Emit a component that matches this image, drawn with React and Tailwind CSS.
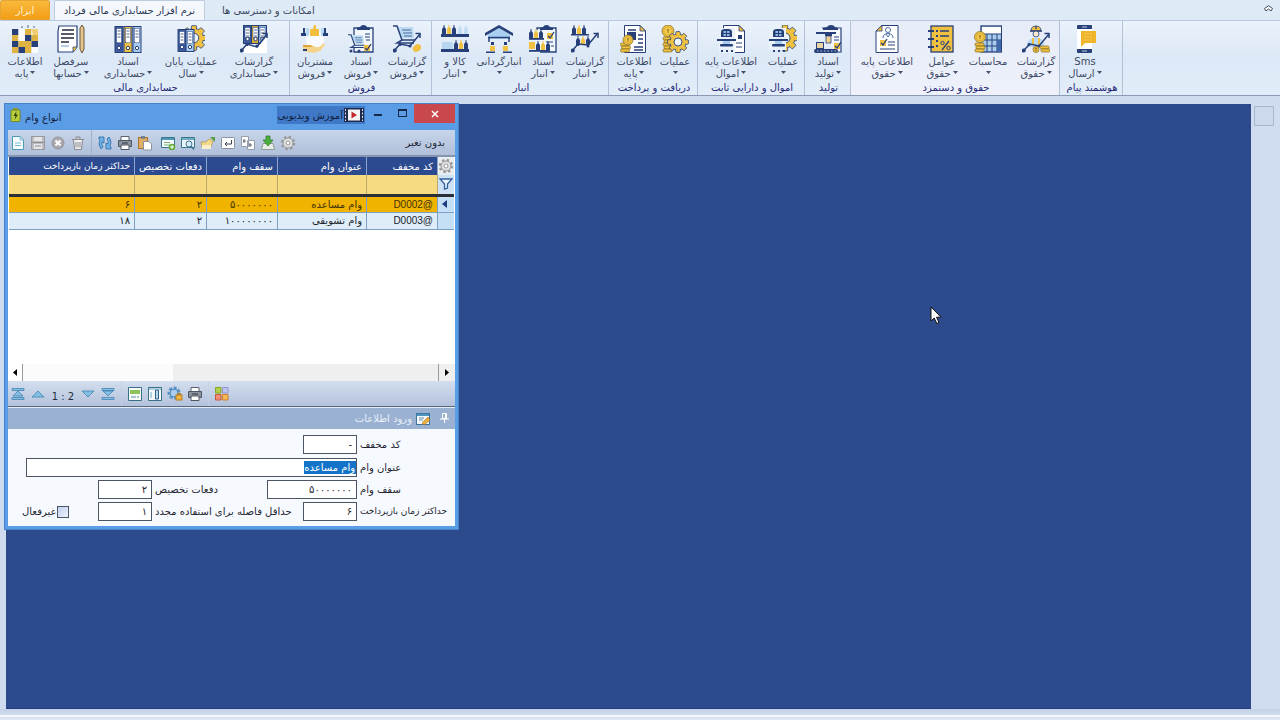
import React, { useState } from "react";

const NAVY = "#27407a";
const GOLD = "#f0c040";

/* ---------- shared icon parts ---------- */

const Page = ({ x = 0, y = 0, w = 20, h = 27 }) => (
  <g transform={`translate(${x} ${y})`}>
    <path d={`M.5 .5H${w - 6}L${w - .5} 6V${h - .5}H.5Z`} fill="#fff" stroke={NAVY} />
    <path d={`M${w - 6} .5V6H${w - .5}Z`} fill={GOLD} stroke={NAVY} strokeWidth=".8" />
  </g>
);

const Binder = ({ x, y = 1, h = 26, color = "#3d5a9a" }) => (
  <g transform={`translate(${x} ${y})`}>
    <rect x=".5" y=".5" width="8" height={h} fill={color} stroke={NAVY} />
    <rect x="2" y="2.5" width="5" height={h * 0.55} fill="#fff" stroke={NAVY} strokeWidth=".5" />
    <path d="M3 5H6M3 8H6M3 11H6" stroke={NAVY} strokeWidth=".8" />
    <circle cx="4.5" cy={h - 4} r="1.7" fill="#fff" stroke={NAVY} />
  </g>
);

const Bottles = ({ x, y, light }) => (
  <g transform={`translate(${x} ${y})`}>
    <path d="M0 9V4L1.5 2V0H2.5V2L4 4V9Z" fill={NAVY} />
    <path d="M5 9V4L6.5 2V0H7.5V2L9 4V9Z" fill={GOLD} />
    <path d="M10 9V4L11.5 2V0H12.5V2L14 4V9Z" fill={NAVY} />
    {light && <path d="M16 9V4L17.5 2V0H18.5V2L20 4V9ZM22 9V4L23.5 2V0H24.5V2L26 4V9Z" fill="#c3ddf3" />}
  </g>
);

const Coins = ({ x, y, n = 3 }) => (
  <g transform={`translate(${x} ${y})`}>
    {Array.from({ length: n }, (_, i) => (
      <rect key={i} x={i % 2} y={i * 3} width="9" height="3" rx="1.2" fill={GOLD} stroke="#80691f" strokeWidth=".7" />
    ))}
  </g>
);

const Coin = ({ x, y, r = 5 }) => (
  <g transform={`translate(${x} ${y})`}>
    <circle r={r} fill="#f3c848" stroke="#8b7128" strokeWidth=".8" />
    <circle r={r - 1.6} fill="none" stroke="#c99b26" strokeWidth=".6" />
    <path d="M0-2V2M-1-1H1" fill="none" stroke="#8a6a1c" strokeWidth=".8" />
  </g>
);

const Gear = ({ x, y, r = 8 }) => (
  <g transform={`translate(${x} ${y})`}>
    {[0, 45, 90, 135].map((a) => (
      <rect key={a} x={-r * 0.27} y={-r * 1.3} width={r * 0.54} height={r * 2.6} rx=".7" fill={GOLD} stroke={NAVY} strokeWidth=".8" transform={`rotate(${a})`} />
    ))}
    <circle r={r} fill={GOLD} stroke={NAVY} strokeWidth=".8" />
    {[0, 45, 90, 135].map((a) => (
      <rect key={a} x={-r * 0.22} y={-r * 1.15} width={r * 0.44} height={r * 2.3} fill={GOLD} transform={`rotate(${a})`} />
    ))}
    <circle r={r * 0.5} fill="#eef4fb" stroke={NAVY} strokeWidth=".9" />
  </g>
);

const Trend = ({ d = "M1 26L7 19L17 21L27 8" }) => (
  <g fill="none" stroke={NAVY} strokeWidth="1.5">
    <path d={d} />
    <path d="M22.5 8.5H27V13" />
    <circle cx="1.8" cy="25.500" r="1.300" fill={NAVY} />
    <circle cx="7" cy="19.500" r=".8" fill={NAVY} />
    <circle cx="17" cy="21" r=".8" fill={NAVY} />
  </g>
);

const Clipboard = ({ x = 6 }) => (
  <g transform={`translate(${x} 0)`}>
    <path d="M1 3H20V27H1Z" fill="#f2f7fc" stroke={NAVY} strokeWidth="1.300" />
    <path d="M4 5V3L7 2Q8 0 10.500 0Q13 0 14 2L17 3V5Z" fill={NAVY} />
  </g>
);

const Tick = ({ x, y }) => (
  <g transform={`translate(${x} ${y})`}>
    <rect width="6" height="6" fill={GOLD} />
    <path d="M1 3L3 5L7-1" fill="none" stroke={NAVY} strokeWidth="1.300" />
  </g>
);

const Cart = () => (
  <g>
    <path d="M5 2H20L21 13H9Z" fill="#bcd9f2" />
    <path d="M0 1H4L9 15H22M9 15L4 18H21" fill="none" stroke={NAVY} strokeWidth="1.500" />
    <path d="M9 5H18M10 8H19M11 11H19" fill="none" stroke="#46699f" />
  </g>
);

const Helmet = () => (
  <g transform="translate(0 3)">
    <path d="M4 9V4Q4 1 8 1H11Q15 1 15 4V9Z" fill={NAVY} />
    <path d="M6.500 3H9V5H6.500ZM10 3H12.500V5H10ZM6.500 6H9V8H6.500ZM10 6H12.500V8H10Z" fill="#8fb6df" />
    <rect y="11" width="19" height="2" fill={NAVY} />
    <rect x="6" y="13" width="7" height="3" fill="#a9cdee" />
    <rect x="3" y="16" width="13" height="2.500" rx="1" fill={NAVY} />
  </g>
);

const CHECKER = ["N.G.", "G.NG", "NGGN", "GNG."];

/* ---------- ribbon icons ---------- */

const ICONS = {
  checker: (
    <g>
      {CHECKER.map((row, y) =>
        row.split("").map((c, x) => (
          <rect key={`${x}-${y}`} x={x * 6.5 + 1} y={y * 6 + 4} width="6.500" height="6" fill={c === "N" ? NAVY : c === "G" ? "#dfb342" : "#f8fafc"} />
        ))
      )}
      <path d="M11 1V3M17 0V3M23 1V3" stroke="#56657f" />
      <path d="M20 4H27V10H22Z" fill="#f0cf78" />
    </g>
  ),
  ledger: (
    <g>
      <path d="M2 1H20V22L16 27H1V6Z" fill="#fff" stroke={NAVY} strokeWidth="1.200" />
      <path d="M5 5H17M4 9H17M4 13H17M4 17H12" stroke="#1f2737" strokeWidth="1.300" />
      <path d="M4 21H12" stroke="#8fb6df" strokeWidth="1.300" />
      <path d="M16 27V22H20" fill={GOLD} stroke={NAVY} strokeWidth=".8" />
      <path d="M23 3L25 0L27 3V24L25 28L23 24Z" fill="#e5c58d" stroke="#57492e" strokeWidth=".9" />
    </g>
  ),
  binders: (
    <g>
      <Binder x={0.5} />
      <Binder x={9.5} color={GOLD} />
      <Binder x={18.5} color="#a7cbee" />
    </g>
  ),
  yearEnd: (
    <g>
      <Gear x={17} y={13} r={9.5} />
      <rect x="0" y="4" width="16" height="24" fill="#edf4fb" />
      <Binder x={0.5} y={4} h={22} />
      <Binder x={8.5} y={4} h={22} color="#a7cbee" />
    </g>
  ),
  binderReport: (
    <g>
      <Binder x={3} y={0} h={18} />
      <Binder x={11} y={0} h={18} color="#d5a93a" />
      <Binder x={18} y={0} h={18} color="#8eb7e0" />
      <path d="M2 26L8 19L18 22L27 11V28H2Z" fill="#fff" />
      <Trend d="M1 26L7 19L17 22L27 9" />
    </g>
  ),
  customers: (
    <g>
      <circle cx="14" cy="15" r="9" fill="#f8fbfe" />
      <path d="M5 3H8V11H5ZM20 3H23V11H20Z" fill="#b7d8f2" />
      <path d="M2 3H4V8H5V11H0V8H2ZM23 3H25V8H27V11H22V8H23Z" fill={NAVY} />
      <path d="M9 4H12L13 0H15V4H18V11H9Z" fill="#f3bd3d" />
      <path d="M2 20H10L15 22H18L23 18L24 20L19 26L13 28L2 26Z" fill="#f4d48a" />
      <path d="M2 20H9L12 22H2Z" fill="#dda334" />
      <path d="M2 24H6V26H2Z" fill={NAVY} />
    </g>
  ),
  saleDocs: (
    <g>
      <Clipboard x={6} />
      <path d="M2 10H16V23H2Z" fill="#e3eef9" />
      <g transform="translate(1 9) scale(.75)"><Cart /></g>
      <path d="M18 9H23M18 12H23M19 15H23" stroke={NAVY} />
      <Tick x={17} y={20} />
      <circle cx="4" cy="26" r="1.500" fill={NAVY} /><circle cx="12" cy="26" r="1.500" fill={NAVY} />
    </g>
  ),
  saleReport: (
    <g>
      <Cart />
      <Trend d="M1 26L7 19L17 21L27 9" />
      <ellipse cx="24" cy="23" rx="4.500" ry="3.500" fill={GOLD} transform="rotate(-35 24 23)" />
    </g>
  ),
  goods: (
    <g>
      <Bottles x={1} y={0} light />
      <rect y="9" width="28" height="3" fill={NAVY} />
      <rect x="1" y="17" width="11" height="7" fill="#b7d7f1" />
      <Bottles x={13} y={15} />
      <rect y="24" width="28" height="3" fill={NAVY} />
    </g>
  ),
  warehouse: (
    <g>
      <path d="M3 9L14 3L25 9V14H3Z" fill="#a9d0f1" />
      <path d="M0 8L14 0L28 8V11L14 3L0 11Z" fill={NAVY} />
      <path d="M3 12.500H25M4 13V17M24 13V17M1 27.200H10M18 27.200H27" stroke={NAVY} strokeWidth="1.500" />
      <rect x="6" y="17" width="3" height="3" fill={NAVY} /><rect x="19" y="17" width="3" height="3" fill={NAVY} />
      <path d="M5 21H10V26H5ZM18 21H23V26H18Z" fill={GOLD} />
    </g>
  ),
  stockDocs: (
    <g>
      <Clipboard x={7} />
      <rect x="0" y="5" width="11" height="23" fill="#e8f1fa" />
      <Bottles x={0} y={4} />
      <rect y="13" width="15" height="1.800" fill={NAVY} />
      <Tick x={18} y={8} />
      <rect x="0" y="17" width="6" height="7" fill={GOLD} />
      <Bottles x={7} y={16} />
      <rect y="25" width="21" height="1.800" fill={NAVY} />
      <path d="M17 17H24M22 21H25" stroke={NAVY} />
    </g>
  ),
  stockReport: (
    <g>
      <Bottles x={1} y={0} />
      <rect y="9" width="18" height="1.500" fill={NAVY} />
      <Bottles x={5} y={11} />
      <Trend d="M1 26L7 19L17 20L27 8" />
    </g>
  ),
  payInfo: (
    <g>
      <Page x={4} y={0} w={22} h={28} />
      <path d="M8 5H16M18 10H23M18 14H23M18 18H23M14 22H23M14 25H23" stroke={NAVY} strokeWidth="1.300" />
      <rect x="7" y="7" width="9" height="8" fill={NAVY} />
      <Coins x={0.5} y={18} />
      <Coin x={8} y={15} r={5} />
    </g>
  ),
  payOps: (
    <g>
      <Coins x={2} y={12} n={5} />
      <Coin x={7} y={6} r={6} />
      <Gear x={17} y={17} r={8} />
    </g>
  ),
  assetInfo: (
    <g>
      <Page x={6} y={0} w={22} h={28} />
      <path d="M2 3H18V28H2Z" fill="#e9f1fa" />
      <Helmet />
      <path d="M21 10H25V14H21Z" fill={NAVY} />
      <path d="M19 18H25M19 22H25" stroke={NAVY} />
      <path d="M4 26H6M9 26H11M14 26H16" stroke={NAVY} strokeWidth="2" />
    </g>
  ),
  assetOps: (
    <g>
      <Gear x={16} y={13} r={10} />
      <path d="M0 0H12V3H17V25H0Z" fill="#e9f1fa" />
      <Helmet />
      <path d="M4 26H6M9 26H11M14 26H16" stroke={NAVY} strokeWidth="2" />
    </g>
  ),
  production: (
    <g>
      <path d="M8 3H27V27H20" fill="#f4f8fd" stroke={NAVY} strokeWidth="1.200" />
      <path d="M9 5V3L13 2Q14 0 17 0Q20 0 21 2L24 3V5Z" fill={NAVY} />
      <path d="M2 7H22V9H2ZM11 9H18V11H11Z" fill={NAVY} />
      <path d="M12 11H17V18H12Z" fill="#f2d090" stroke={NAVY} strokeWidth=".8" />
      <path d="M20 12H25M20 15H25" stroke={NAVY} />
      <Tick x={20} y={18} />
      <rect x="2.500" y="17.500" width="7" height="6" fill="#e8d5a3" stroke={NAVY} />
      <rect x="0" y="24" width="24" height="4" rx="2" fill={NAVY} />
      <path d="M3 26H22" stroke="#b5c6de" strokeDasharray="1.500 2" />
    </g>
  ),
  salaryInfo: (
    <g>
      <path d="M3 6L9 .5H25V27.500H3Z" fill="#fff" stroke={NAVY} />
      <path d="M3 6H9V.5Z" fill={GOLD} stroke={NAVY} strokeWidth=".8" />
      <circle cx="15" cy="5" r="2.500" fill="#fff" stroke="#4d6ea8" />
      <path d="M10 13Q10 8.500 15 8.500Q20 8.500 20 13M13 9L15 12L17 9" fill="none" stroke="#4d6ea8" />
      <Tick x={7} y={15} />
      <path d="M15 17H22M15 20H22M7 24H22" stroke={NAVY} />
    </g>
  ),
  factors: (
    <g>
      <rect x="3" y="1" width="22" height="26" fill={GOLD} stroke={NAVY} strokeWidth="1.300" />
      <path d="M0 6H6M0 14H6M0 22H6" stroke={NAVY} strokeWidth="2" />
      <path d="M12 6H21M12 11H21" stroke={NAVY} strokeWidth="1.400" />
      <path d="M8 5H10V7H8ZM8 10H10V12H8ZM8 15H10V17H8ZM8 20H10V22H8Z" fill={NAVY} />
      <path d="M14 25L21 16" stroke={NAVY} strokeWidth="1.300" />
      <circle cx="14.500" cy="18" r="1.700" fill="none" stroke={NAVY} /><circle cx="20.500" cy="23" r="1.700" fill="none" stroke={NAVY} />
    </g>
  ),
  calc: (
    <g>
      <rect x="7" y="1" width="20.500" height="26" fill="#a9cdee" stroke={NAVY} strokeWidth="1.300" />
      <rect x="8" y="2" width="19" height="7" fill="#fff" />
      <path d="M13 9V27M18 9V27M23 9V27M8 9H28M8 15H28M8 21H28" stroke={NAVY} />
      <rect x="23" y="15" width="4" height="11" fill="#3e68a8" />
      <Coins x={1} y={18} />
      <Coin x={6} y={12} r={5.5} />
    </g>
  ),
  salaryReport: (
    <g>
      <path d="M9 6Q9 1 14 1Q19 1 19 6Z" fill={GOLD} stroke={NAVY} strokeWidth=".8" />
      <path d="M8 6H20M14 1V4" stroke={NAVY} strokeWidth="1.300" />
      <circle cx="14" cy="9" r="3" fill="#fbe8ce" stroke={NAVY} strokeWidth=".8" />
      <path d="M5 20Q5 13 14 13Q21 13 22 18V22H5Z" fill="#b8d8f4" />
      <path d="M11 13V20M17 13V20" stroke={GOLD} strokeWidth="2" />
      <Trend d="M1 26L8 19L17 21L27 9" />
      <Coin x={14} y={24.5} r={3} />
      <Coins x={18} y={21} n={2} />
    </g>
  ),
  sms: (
    <g>
      <rect x="6" y="1" width="15" height="26" rx="1" fill="#fff" />
      <path d="M6 4V1Q6 0 7 0H20Q21 0 21 1V4ZM6 24H21V27Q21 28 20 28H7Q6 28 6 27Z" fill={NAVY} />
      <path d="M11 2H16M11 26H16" stroke="#b8cbe4" />
      <path d="M10 6H25V18H14L10 22Z" fill="#f0b429" />
      <path d="M13 9H22M13 12H22M13 15H20" stroke="#f6cb6b" strokeDasharray="2 1" />
    </g>
  ),
};

/* ---------- ribbon ---------- */

const GROUPS = [
  {
    title: "حسابداری مالی",
    cls: "w-[290px]",
    items: [
      ["checker", "اطلاعات", "پایه", "w-[46px]"],
      ["ledger", "سرفصل", "حسابها", "w-[46px]"],
      ["binders", "اسناد", "حسابداری", "w-[68px]"],
      ["yearEnd", "عملیات پایان", "سال", "w-[58px]"],
      ["binderReport", "گزارشات", "حسابداری", "w-[68px]"],
    ],
  },
  {
    title: "فروش",
    cls: "w-[142px]",
    items: [
      ["customers", "مشتریان", "فروش", "w-[46px]"],
      ["saleDocs", "اسناد", "فروش", "w-[46px]"],
      ["saleReport", "گزارشات", "فروش", "w-[46px]"],
    ],
  },
  {
    title: "انبار",
    cls: "w-[177px]",
    items: [
      ["goods", "کالا و", "انبار", "w-[42px]"],
      ["warehouse", "انبارگردانی", "", "w-[46px]"],
      ["stockDocs", "اسناد", "انبار", "w-[42px]"],
      ["stockReport", "گزارشات", "انبار", "w-[42px]"],
    ],
  },
  {
    title: "دریافت و پرداخت",
    cls: "w-[89px]",
    items: [
      ["payInfo", "اطلاعات", "پایه", "w-[46px]"],
      ["payOps", "عملیات", "", "w-[36px]"],
    ],
  },
  {
    title: "اموال و دارایی ثابت",
    cls: "w-[107px]",
    items: [
      ["assetInfo", "اطلاعات پایه", "اموال", "w-[62px]"],
      ["assetOps", "عملیات", "", "w-[42px]"],
    ],
  },
  { title: "تولید", cls: "w-[46px]", items: [["production", "اسناد", "تولید", "w-[42px]"]] },
  {
    title: "حقوق و دستمزد",
    cls: "w-[209px] bg-linear-to-b from-[#e6ecf8] to-[#eef1fa]",
    items: [
      ["salaryInfo", "اطلاعات پایه", "حقوق", "w-[68px]"],
      ["factors", "عوامل", "حقوق", "w-[42px]"],
      ["calc", "محاسبات", "", "w-[50px]"],
      ["salaryReport", "گزارشات", "حقوق", "w-[46px]"],
    ],
  },
  { title: "هوشمند پیام", cls: "w-[63px]", items: [["sms", "Sms", "ارسال", "w-[46px]"]] },
];

const RibbonButton = ({ icon, top, bottom, width }) => (
  <button type="button" className={`flex flex-col items-center whitespace-nowrap text-[10px] leading-[11px] text-[#3d4a66] ${width}`}>
    <svg width="28" height="28" viewBox="0 0 28 28">{ICONS[icon]}</svg>
    <span className="mt-[3px]" dir="rtl">{top}</span>
    <span className="flex h-3 items-center gap-0.5">
      {bottom && <span dir="rtl">{bottom}</span>}
      <svg width="5" height="4" viewBox="0 0 5 4"><path d="M0 0H5L2.500 3Z" fill="#45516b" /></svg>
    </span>
  </button>
);

function Ribbon() {
  return (
    <header>
      <nav className="flex h-5 items-stretch bg-[#deeaf6] text-[10px]">
        <button type="button" className="w-[50px] rounded-t-xs border border-[#e8a433] bg-linear-to-b from-[#f9b93a] to-[#f29e12] text-[#fff1cf]">ابزار</button>
        <button type="button" className="ml-1 w-[151px] rounded-t-xs border-x border-t border-[#bccbdf] bg-[#f4f8fd] text-[#2b3852]" dir="rtl">
          نرم افزار حسابداری مالی فرداد
        </button>
        <button type="button" className="px-[17px] text-[#3a4862]" dir="rtl">امکانات و دسترسی ها</button>
        <button type="button" aria-label="collapse" className="mr-1 ml-auto flex w-4 items-center justify-center pb-1">
          <svg width="9" height="7" viewBox="0 0 9 7" fill="#fff" stroke="#3f4b60"><path d="M.5 3.500L4.500 .7L8.500 3.500L7 6L4.500 4L2 6Z" /></svg>
        </button>
      </nav>
      <div className="flex h-[76px] border-t border-b border-t-[#b9c8dc] border-b-[#8b9bb5] bg-linear-to-b from-[#eaf2fb] via-[#dce8f6] to-[#e2edf9]">
        {GROUPS.map((g) => (
          <section key={g.title} className={`flex shrink-0 flex-col border-r border-[#b3c1d8] pt-1 pl-0.5 ${g.cls}`}>
            <div className="flex">
              {g.items.map(([icon, top, bottom, width]) => (
                <RibbonButton key={icon} icon={icon} top={top} bottom={bottom} width={width} />
              ))}
            </div>
            <h2 className="mt-[3px] text-center text-[10px] leading-3 whitespace-nowrap text-[#252a78]" dir="rtl">{g.title}</h2>
          </section>
        ))}
      </div>
    </header>
  );
}

/* ---------- window toolbars ---------- */

const Glyph = ({ children }) => (
  <svg width="16" height="16" viewBox="0 0 16 16" fill="none">{children}</svg>
);

const TOOLS = {
  new: <Glyph><path d="M2.500 1.500H10L13.500 5V14.500H2.500Z" fill="#f5fcff" stroke="#4a9ab5" /><path d="M10 1.500V5H13.500M5 8H11M5 10.500H11" stroke="#7fbad0" /></Glyph>,
  save: <Glyph><path d="M1.500 1.500H14.500V14.500H1.500Z" fill="#bcbcc0" stroke="#97979e" /><path d="M4 2H12V6H4ZM4 9H12V14H4Z" fill="#e5e5e8" /><path d="M5 11H11M2 7.500H14" stroke="#8e8e94" /></Glyph>,
  cancel: <Glyph><circle cx="8" cy="8" r="6" fill="#a9a9ad" stroke="#94949a" /><path d="M5.500 5.500L10.500 10.500M10.500 5.500L5.500 10.500" stroke="#fff" strokeWidth="2" /></Glyph>,
  trash: <Glyph><path d="M4 5H12L11 14H5Z" fill="#f2f2f2" /><path d="M2 4.500H14M6 4V2H10V4M3.500 5L4.500 14.500H11.500L12.500 5M6 7V12.500M8 7V12.500M10 7V12.500" stroke="#8c8c90" /></Glyph>,
  refresh: <Glyph><path d="M7 2H2V4L3 5Q1 9 3 12L4 14L6 12Q4 9 5 7L7 8ZM9 14H14V12L13 11Q15 7 13 4L12 2L10 4Q12 7 11 9L9 8Z" fill="#6eb2e8" stroke="#286ba5" strokeWidth=".8" /></Glyph>,
  print: <Glyph><path d="M4 1.500H12V6H4Z" fill="#fff" stroke="#5b626d" /><path d="M1.500 5.500H14.500V11.500H1.500Z" fill="#8b949f" stroke="#4e5660" /><path d="M4 10H12V14.500H4Z" fill="#fff" stroke="#4e5660" /><path d="M5 8H11" stroke="#333b45" /></Glyph>,
  paste: <Glyph><rect x="1.500" y="2.500" width="9" height="11" fill="#e2ad64" stroke="#a9702c" /><rect x="4" y="1" width="4" height="3" fill="#778391" /><path d="M6.500 6.500H12L14.500 9V15H6.500Z" fill="#fff" stroke="#8993a0" /></Glyph>,
  addRow: <Glyph><path d="M1.500 2.500H14.500V12.500H1.500Z" fill="#f8fcfd" stroke="#39778f" /><path d="M2 4H14" stroke="#4e98b7" strokeWidth="2" /><path d="M4 7.500H10M4 10H9" stroke="#79ae72" /><circle cx="12" cy="12" r="3.300" fill="#62ad39" /><path d="M10 12H14M12 10V14" stroke="#fff" /></Glyph>,
  find: <Glyph><path d="M1.500 2.500H14.500V12.500H1.500Z" fill="#eaf5fb" stroke="#39778f" /><path d="M2 4H14" stroke="#72aac5" strokeWidth="2" /><circle cx="9" cy="9" r="3" fill="#d5ecf9" stroke="#49738f" /><path d="M11 11L14 14.500" stroke="#49738f" strokeWidth="1.500" /></Glyph>,
  edit: <Glyph><path d="M1 7H6L9 4L13 6L11 12H2Z" fill="#f3d989" stroke="#b99750" strokeWidth=".8" /><path d="M10 2H15V7Z" fill="#549e42" /><path d="M2 10H11V14H2Z" fill="#f9edca" /></Glyph>,
  enter: <Glyph><rect x="1.500" y="2.500" width="13" height="11" rx="1" fill="#fff" stroke="#8b919c" /><path d="M11.500 5V9H5M7 7L5 9L7 11" stroke="#3f4652" /></Glyph>,
  copy: <Glyph><path d="M1.500 1.500H8.500V11.500H1.500ZM7.500 5.500H14.500V14.500H7.500Z" fill="#fff" stroke="#959da8" /><path d="M4 4V8M3 6H6M10 8V12M9 10H12" stroke="#56606e" /></Glyph>,
  export: <Glyph><path d="M3 8.500H13L14.500 14.500H1.500Z" fill="#e7ece6" stroke="#929b91" /><path d="M6 1H10V5H13L8 11L3 5H6Z" fill="#4caf3b" stroke="#2e7a24" strokeWidth=".7" /></Glyph>,
  gear: <Glyph><circle cx="8" cy="8" r="6" stroke="#9a9a9d" strokeWidth="2.500" strokeDasharray="2.400 2.300" /><circle cx="8" cy="8" r="5" fill="#e2e2e2" stroke="#949498" /><circle cx="8" cy="8" r="2" fill="#fff" stroke="#949498" /></Glyph>,
  first: <Glyph><path d="M2 2.500H14V4.500H2ZM8 5L13 10H3ZM2 11.500H14V13.500H2Z" fill="#82bfe3" stroke="#4384b2" strokeWidth=".8" /></Glyph>,
  prev: <Glyph><path d="M8 5L14 11H2Z" fill="#82bfe3" stroke="#4384b2" strokeWidth=".8" /></Glyph>,
  next: <Glyph><path d="M8 11L14 5H2Z" fill="#82bfe3" stroke="#4384b2" strokeWidth=".8" /></Glyph>,
  last: <Glyph><path d="M2 2.500H14V4.500H2ZM8 10L13 5H3ZM2 11.500H14V13.500H2Z" fill="#82bfe3" stroke="#4384b2" strokeWidth=".8" /></Glyph>,
  layout: <Glyph><path d="M1.500 1.500H14.500V14.500H1.500Z" fill="#f7fbf8" stroke="#377185" /><path d="M3 4H13V8H3Z" fill="#8cc35a" /><path d="M4 11H9M10 11H12" stroke="#5b93a5" /></Glyph>,
  columns: <Glyph><path d="M1.500 1.500H14.500V14.500H1.500Z" fill="#f7fbff" stroke="#377185" /><path d="M8.500 4H11.500V13H8.500Z" fill="#b8d8ec" stroke="#2d5c83" /><path d="M2 3H14M4 6V12" stroke="#6fa3c3" /></Glyph>,
  lock: <Glyph><circle cx="7" cy="7" r="5" stroke="#5b93c4" strokeWidth="3" strokeDasharray="3 1.500" /><circle cx="7" cy="7" r="4" fill="#a9cdec" stroke="#4d85b6" /><rect x="9" y="9" width="6" height="5" fill="#f1b43f" stroke="#b57f1f" /><path d="M10.500 9V7.500H13.500V9" stroke="#b57f1f" /></Glyph>,
  tiles: <Glyph><path d="M1.500 1.500H7V7H1.500Z" fill="#b4cf4e" stroke="#88a52a" /><path d="M8.500 1.500H14V7H8.500Z" fill="#b7c7ee" stroke="#9d8fd0" /><path d="M1.500 8.500H7V14H1.500Z" fill="#f19078" stroke="#c8573c" /><path d="M8.500 8.500H14V14H8.500Z" fill="#f6b65b" stroke="#cb8427" /></Glyph>,
};

const ToolButton = ({ name }) => (
  <button type="button" aria-label={name} className="flex w-5 items-center justify-center">{TOOLS[name]}</button>
);

const ROWS = [
  { code: "D0002@", title: "وام مساعده", limit: "۵۰۰۰۰۰۰۰", times: "۲", months: "۶" },
  { code: "D0003@", title: "وام تشویقی", limit: "۱۰۰۰۰۰۰۰۰", times: "۲", months: "۱۸" },
];

function LoanTable() {
  const th = "h-[18px] border-r border-[#8ea5cd] px-1 font-normal";
  const td = "border-r border-b border-[#7e9fc4] px-1";
  return (
    <table className="mx-px table-fixed border-collapse text-right text-[10px] leading-[11px] whitespace-nowrap">
      <colgroup>
        <col />
        <col className="w-[71px]" />
        <col className="w-[71px]" />
        <col className="w-[89px]" />
        <col className="w-[71px]" />
        <col className="w-[16px]" />
      </colgroup>
      <thead>
        <tr className="bg-[#2b4a8f] text-white">
          <th className={`${th} text-[9px]`} dir="rtl">حداکثر زمان بازپرداخت</th>
          <th className={th} dir="rtl">دفعات تخصیص</th>
          <th className={th} dir="rtl">سقف وام</th>
          <th className={th} dir="rtl">عنوان وام</th>
          <th className={th} dir="rtl">کد مخفف</th>
          <th className="bg-[#e9eef3]">{TOOLS.gear}</th>
        </tr>
        <tr className="h-5 border-b-3 border-[#2a2f38] bg-[#f6db80]">
          {[0, 1, 2, 3, 4].map((i) => (
            <td key={i} className="border-r border-r-[#b9a96c]" />
          ))}
          <td className="bg-[#cde3f5] pl-px">
            <svg width="14" height="12" viewBox="0 0 14 12"><path d="M1 1H13L8.500 6V10L5.500 11V6Z" fill="#e8f3fc" stroke="#31609c" strokeWidth="1.300" /></svg>
          </td>
        </tr>
      </thead>
      <tbody>
        {ROWS.map((r, i) => (
          <tr key={r.code} className={i === 0 ? "h-[17px] bg-[#f0b400] text-[#43320a]" : "h-[17px] bg-[#deedf7] text-[#20242c]"}>
            <td className={td}>{r.months}</td>
            <td className={td}>{r.times}</td>
            <td className={td}>{r.limit}</td>
            <td className={td} dir="rtl">{r.title}</td>
            <td className={`${td} font-['Liberation_Sans',sans-serif]`}>{r.code}</td>
            <td className="border-b border-[#7e9fc4] bg-[#c5e0f5]">
              {i === 0 && <svg className="ml-1" width="6" height="8" viewBox="0 0 6 8"><path d="M5 0V8L0 4Z" fill="#1d3c80" /></svg>}
            </td>
          </tr>
        ))}
      </tbody>
    </table>
  );
}

const FIELD = "h-[19px] border border-[#4c5563] bg-white px-1 text-right text-[10px] text-[#1f2530] outline-none";

function LoanForm() {
  const [loan, setLoan] = useState({ code: "-", limit: "۵۰۰۰۰۰۰۰", times: "۲", months: "۶", gap: "۱", title: "وام مساعده" });
  const bind = (key) => ({
    id: key,
    value: loan[key],
    onChange: (e) => setLoan((prev) => ({ ...prev, [key]: e.target.value })),
  });

  return (
    <form className="flex flex-col gap-[3px] bg-[#f6faff] pt-[6px] pr-[6px] pb-[5px] text-[10px] whitespace-nowrap text-[#1f2530]">
      <div className="mb-px flex items-center justify-end gap-[3px]">
        <input className={`${FIELD} w-[54px]`} {...bind("code")} />
        <label htmlFor="code" dir="rtl" className="w-[89px] text-left">کد مخفف</label>
      </div>
      <div className="flex items-center gap-[3px] pl-[18px]">
        <div className="flex h-[19px] min-w-0 flex-1 items-center border border-[#4c5563] bg-white">
          <input
            className="w-full bg-transparent bg-linear-to-l from-[#1273c8] to-[#1273c8] bg-[length:52px_13px] bg-right bg-no-repeat px-px text-right text-[10px] leading-[13px] text-white outline-none"
            dir="rtl"
            {...bind("title")}
          />
        </div>
        <label htmlFor="title" dir="rtl" className="w-[89px] text-left">عنوان وام</label>
      </div>
      <div className="flex items-center gap-[3px]">
        <span className="w-[87px]" />
        <input className={`${FIELD} w-[54px]`} {...bind("times")} />
        <label htmlFor="times" dir="rtl" className="flex-1 text-left">دفعات تخصیص</label>
        <input className={`${FIELD} w-[90px]`} {...bind("limit")} />
        <label htmlFor="limit" dir="rtl" className="w-[89px] text-left">سقف وام</label>
      </div>
      <div className="flex items-center gap-[3px]">
        <span className="flex w-[87px] items-center gap-px pl-[14px]">
          <label htmlFor="inactive">غیرفعال</label>
          <input id="inactive" type="checkbox" className="size-3 appearance-none border border-[#4c5563] bg-linear-to-br from-[#c3d2f2] to-[#edf2fc]" />
        </span>
        <input className={`${FIELD} w-[54px]`} {...bind("gap")} />
        <label htmlFor="gap" dir="rtl" className="flex-1 text-left">حداقل فاصله برای استفاده مجدد</label>
        <input className={`${FIELD} w-[54px]`} {...bind("months")} />
        <label htmlFor="months" dir="rtl" className="w-[89px] text-left text-[9px]">حداکثر زمان بازپرداخت</label>
      </div>
    </form>
  );
}

function LoanWindow() {
  return (
    <div className="absolute -top-px -left-0.5 w-[455px] border border-[#4584cc] bg-[#5a9de6] px-[3px] pb-[3px]">
      <div className="flex h-[26px] items-start text-[10px]">
        <svg className="mt-1 ml-0.5" width="11" height="14" viewBox="0 0 11 14">
          <rect x="3" width="5" height="2" fill="#8b9b35" />
          <rect x="1" y="2" width="9" height="11.500" rx="1" fill="#b9cf3c" stroke="#738423" />
          <path d="M6.500 3L3.500 8H5.500L4.500 12L8 6.500H6Z" fill="#33420f" />
        </svg>
        <h1 className="mt-[6px] ml-1 text-[#14233d]" dir="rtl">انواع وام</h1>
        <button type="button" className="mt-0.5 ml-auto flex h-[18px] items-center gap-px bg-[#3f78c6] px-px text-[#10203c]">
          <span dir="rtl">آموزش ویدیویی</span>
          <svg width="20" height="14" viewBox="0 0 20 14">
            <rect width="20" height="14" fill="#1f2c4d" />
            <path d="M1.500 1V13M18.500 1V13" stroke="#d5dff0" strokeDasharray="2 1.500" />
            <rect x="4" y="1.500" width="12" height="11" fill="#f3f3f5" />
            <path d="M7.500 3.500L13 7L7.500 10.500Z" fill="#c0282d" />
          </svg>
        </button>
        <button type="button" aria-label="minimize" className="ml-px flex h-[18px] w-6 items-center justify-center pt-1"><span className="h-0.5 w-2 bg-[#16284a]" /></button>
        <button type="button" aria-label="maximize" className="flex h-[18px] w-6 items-center justify-center"><span className="h-2 w-[9px] border border-t-2 border-[#16284a]" /></button>
        <button type="button" aria-label="close" className="flex h-[19px] w-[41px] items-center justify-center bg-[#c9484d]">
          <svg width="8" height="8" viewBox="0 0 8 8"><path d="M1 1L7 7M7 1L1 7" stroke="#fff" strokeWidth="1.500" /></svg>
        </button>
      </div>

      <div className="flex h-[25px] items-stretch bg-linear-to-b from-[#c8d5e9] to-[#b0c0db]">
        {["new", "save", "cancel", "trash"].map((n) => <ToolButton key={n} name={n} />)}
        <span className="mx-[3px] w-px bg-[#9fb0cc]" />
        {["refresh", "print", "paste"].map((n) => <ToolButton key={n} name={n} />)}
        <span className="w-[3px]" />
        {["addRow", "find", "edit", "enter", "copy", "export", "gear"].map((n) => <ToolButton key={n} name={n} />)}
        <span className="mr-[10px] ml-auto self-center text-[10px] text-[#1b2538]" dir="rtl">بدون تغیر</span>
      </div>

      <div className="flex h-[226px] flex-col border-t-2 border-[#8595b0] bg-white">
        <LoanTable />
        <div className="mt-auto flex h-[17px] items-center justify-between bg-linear-to-r from-[#fbfbfc] from-37% to-[#efeff0] to-37%">
          <button type="button" aria-label="scroll left" className="flex h-full w-[15px] items-center justify-center border-r border-[#9a9a9a] bg-white">
            <svg width="4" height="7" viewBox="0 0 4 7"><path d="M4 0V7L0 3.500Z" /></svg>
          </button>
          <button type="button" aria-label="scroll right" className="flex h-full w-[17px] items-center justify-center border-l border-[#9a9a9a]">
            <svg width="4" height="7" viewBox="0 0 4 7"><path d="M0 0V7L4 3.500Z" /></svg>
          </button>
        </div>
      </div>

      <div className="flex h-[26px] items-stretch border-b border-[#596780] bg-linear-to-b from-[#d3deee] to-[#b3c2dc] pt-px">
        <ToolButton name="first" />
        <ToolButton name="prev" />
        <span className="flex w-[30px] items-center justify-center pt-1 text-[10px] text-[#222c3e]">1 : 2</span>
        <ToolButton name="next" />
        <ToolButton name="last" />
        <span className="mx-[3px] w-px bg-[#c3cfe2]" />
        {["layout", "columns", "lock", "print"].map((n) => <ToolButton key={n} name={n} />)}
        <span className="mx-[3px] w-px bg-[#c3cfe2]" />
        <ToolButton name="tiles" />
      </div>

      <div className="flex h-[22px] items-center justify-end border-t border-[#e3ebf5] bg-[#9ab1d1] pr-[6px] text-[10px] text-[#e9f0fa]">
        <span dir="rtl">ورود اطلاعات</span>
        <svg className="ml-1" width="14" height="14" viewBox="0 0 14 14">
          <rect x=".5" y="1.500" width="13" height="11" fill="#f4f8fb" stroke="#3c769e" />
          <path d="M1 3H13" stroke="#4e94c0" strokeWidth="2" />
          <path d="M3 6H8M3 8H7" stroke="#6b91ad" />
          <path d="M6 11L12 5L14 8L8 13Z" fill="#f0b13a" stroke="#a16b1d" strokeWidth=".6" />
        </svg>
        <svg className="ml-[10px]" width="9" height="11" viewBox="0 0 9 11" fill="none" stroke="#fff"><path d="M2.500 .5H6.500V5.500H2.500ZM0 6H9M4.500 6V10M5.500 1V5" /></svg>
      </div>
      <LoanForm />
    </div>
  );
}

export default function App() {
  return (
    <div className="flex min-h-screen flex-col bg-[#cfdcf0] font-['DejaVu_Sans',sans-serif]">
      <Ribbon />
      <main className="flex flex-1 pt-2">
        <div className="relative ml-[6px] flex-1 border-b border-[#24407c] bg-[#2c4a8c]">
          <LoanWindow />
          <svg className="absolute top-[202px] left-[924px]" width="12" height="19" viewBox="0 0 12 19">
            <path d="M1 1V15L4.200 12L6.800 17.500L9 16.500L6.500 11.200H11Z" fill="#fff" stroke="#111" />
          </svg>
        </div>
        <aside className="w-[29px] bg-[#d0dcf0] pt-0.5 pl-[3px]">
          <button type="button" aria-label="panel" className="size-5 border border-[#a8b7d0] bg-[#cbd8ee]" />
        </aside>
      </main>
      <footer className="h-[11px] bg-linear-to-b from-[#c3d1e8] to-[#dfe8f3] pt-[6px]">
        <div className="h-0.5 bg-[#f4f8fc]" />
      </footer>
    </div>
  );
}
